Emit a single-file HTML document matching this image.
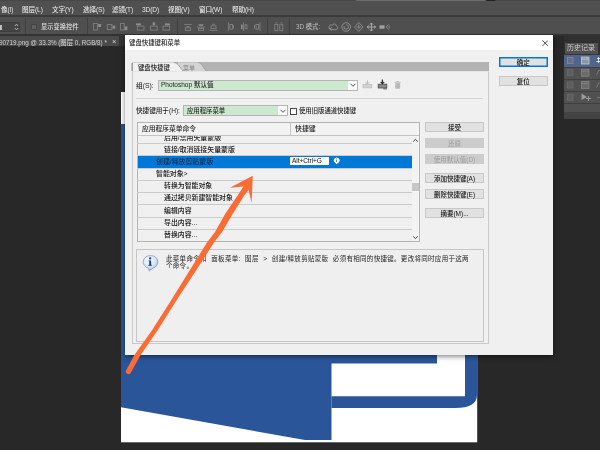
<!DOCTYPE html>
<html lang="zh-CN">
<head>
<meta charset="utf-8">
<title>键盘快捷键和菜单</title>
<style>
*{box-sizing:border-box;margin:0;padding:0}
html,body{width:600px;height:450px;overflow:hidden;background:#282828}
body{position:relative;font-family:"Liberation Sans","Noto Sans CJK SC",sans-serif;font-size:6.9px;color:#1c1c1c;font-weight:500}
.a{position:absolute;white-space:nowrap}
.t{position:absolute;white-space:nowrap;height:12px;line-height:12px;will-change:transform}
/* ---------- photoshop chrome ---------- */
#menubar{left:0;top:0;width:600px;height:15.5px;background:#505050}
#menuline{left:0;top:15.4px;width:600px;height:1.9px;background:#3b3b3b}
#optbar{left:0;top:17.3px;width:600px;height:16.5px;background:#4f4f4f}
#optline{left:0;top:33.8px;width:600px;height:2.5px;background:#333333}
.m{color:#e6e6e6;font-size:6.6px;letter-spacing:-0.1px;top:4.3px}
.o{color:#d0d0d0;font-size:7px;top:21px}
.vs{position:absolute;top:18px;width:1.2px;height:15.8px;background:#414141}
#tabstrip{left:0;top:36.3px;width:126px;height:10.2px;background:#343434}
#doctab{left:0;top:36.3px;width:118.7px;height:10.2px;background:#4a4a4a}
/* ---------- dialog ---------- */
#dlg{left:125px;top:34.7px;width:428px;height:320.3px;background:#f0f0f0;box-shadow:0 1.5px 5px rgba(0,0,0,.5)}
#dtitle{left:0;top:0;width:428px;height:15.6px;background:linear-gradient(#fff 0,#fff 14.6px,#f0f0f0 15.6px)}
.btn{position:absolute;will-change:transform;height:9.6px;line-height:9.6px;text-align:center;background:#e1e1e1;border:1px solid #c8c8c8;font-size:6.5px;color:#111;white-space:nowrap}
.btn.dis{background:#cccccc;border-color:#cccccc;color:#a2a2a2}
.sel{position:absolute;height:11px;background:#cce8cf;border:1px solid #b4b4b4}
.sel i{position:absolute;right:0;top:0;bottom:0;width:9px;background:#fafafa}
.row{position:absolute;left:137px;width:274.5px;height:1.2px;background:#cbcbcb}
</style>
</head>
<body>
<!-- menu bar -->
<div class="a" id="menubar"></div>
<div class="a" id="menuline"></div>
<div class="a" style="left:0;top:0;width:600px;height:1px;background:linear-gradient(90deg,#474747 0,#474747 355px,#6c6c6c 357px,#6c6c6c 485px,#222 487px,#222 495px,#474747 496px)"></div>
<div class="a" id="optbar"></div>
<div class="a" id="optline"></div>
<div class="t m" style="left:0.8px">像(I)</div>
<div class="t m" style="left:22px">图层(L)</div>
<div class="t m" style="left:52px">文字(Y)</div>
<div class="t m" style="left:82.5px">选择(S)</div>
<div class="t m" style="left:112px">滤镜(T)</div>
<div class="t m" style="left:142px">3D(D)</div>
<div class="t m" style="left:168px">视图(V)</div>
<div class="t m" style="left:199px">窗口(W)</div>
<div class="t m" style="left:232px">帮助(H)</div>
<!-- options bar -->
<div class="a" style="left:-2px;top:21.7px;width:22px;height:10px;background:#444444;border:0.8px solid #3e3e3e;border-radius:1.5px"></div>
<svg class="a" style="left:14px;top:23px" width="5" height="8" viewBox="0 0 5 8"><path d="M0.8 3 L2.5 1.2 L4.2 3 M0.8 5 L2.5 6.8 L4.2 5" fill="none" stroke="#c8c8c8" stroke-width="0.9"/></svg>
<div class="a" style="left:0;top:25px;width:2px;height:5px;background:#bdbdbd"></div>
<div class="vs" style="left:25px"></div>
<div class="a" style="left:31.3px;top:23.7px;width:5.8px;height:6.3px;background:#5f5f5f;border:0.8px solid #444"></div>
<div class="t o" style="left:41px;top:21.3px;font-size:6.25px;color:#dedede">显示变换控件</div>
<div class="vs" style="left:87px"></div>
<svg class="a" style="left:90px;top:20px" width="300" height="14" viewBox="90 20 300 14" fill="none" stroke="#808080" stroke-width="0.9">
 <g>
 <rect x="93.6" y="23.5" width="4" height="6.5"/><rect x="98.3" y="24" width="2.8" height="3" fill="#8c8c8c" stroke="none"/>
 <rect x="107.3" y="24.6" width="4.6" height="5"/><rect x="112.6" y="25.5" width="2.6" height="3.2" fill="#8c8c8c" stroke="none"/>
 <rect x="120.6" y="23.5" width="3.6" height="6.5"/><rect x="124.8" y="26.4" width="2.6" height="3.8" fill="#8c8c8c" stroke="none"/>
 <rect x="136" y="23.4" width="5" height="1.9" fill="#8c8c8c" stroke="none"/><rect x="137.4" y="26.1" width="6.6" height="4"/>
 <rect x="152.7" y="22.4" width="2.4" height="2.8" fill="#8c8c8c" stroke="none"/><rect x="150.5" y="26.1" width="6.6" height="4"/>
 <rect x="165" y="23.4" width="5" height="1.9" fill="#8c8c8c" stroke="none"/><rect x="163" y="26.1" width="6.6" height="4"/>
 <path d="M184 24.4h8M186.5 26.5h3"/><rect x="185.5" y="27.8" width="5" height="2.6"/>
 <path d="M197 27.200h8"/><rect x="198.700" y="24.3" width="4.6" height="1.6" fill="#8c8c8c" stroke="none"/><rect x="198.5" y="28.5" width="5" height="2"/>
 <path d="M209.5 30.400h8M212 24.300h3"/><rect x="211" y="25.8" width="5" height="2.8"/>
 <path d="M228.400 22.5v8.5M233.5 25v3.5"/><rect x="229.8" y="24.5" width="2.6" height="4.6"/>
 <path d="M243.5 22.5v8.5"/><rect x="241" y="24.5" width="1.6" height="4.6" fill="#8c8c8c" stroke="none"/><rect x="245" y="24.8" width="2" height="4"/>
 <path d="M260 22.5v8.5M254.5 25v3.5"/><rect x="256" y="24.5" width="2.6" height="4.6"/>
 <rect x="274.8" y="24.3" width="3" height="6.400"/><rect x="279.8" y="24.3" width="3" height="6.400"/><path d="M275.5 22.800h1.600M280.5 22.800h1.6"/>
 </g>
 <g stroke="#959595">
 <path d="M329.300 28.600c-1.200-2.600 1.200-4.600 3-3.400c1-2 4.400-1.200 4.200 1c1.600 0.400 1.800 2.800 0 3.200c-2 0.5-5 0.400-7.200-0.800z"/><path d="M331.5 30.5l-2.200-1.900l2.600-0.900" stroke-width="0.8"/>
 <circle cx="346.2" cy="27" r="4.3"/><path d="M346.200 24.800a2.200 2.200 0 1 1-2.100 1.5"/>
 <path d="M358.800 22.600l4.300 4.400l-4.300 4.400l-4.300-4.400zM358.800 24.600v4.800M356.400 27h4.8" stroke-width="0.8"/>
 <path d="M371.400 23v8M367.200 27h8.400M369.900 24.600l1.5-1.600l1.5 1.600M369.900 29.400l1.5 1.600l1.5-1.600M368.800 25.5l-1.600 1.5l1.600 1.5M374 25.5l1.600 1.5l-1.600 1.5" stroke="#b4b4b4"/>
 <rect x="379.5" y="25.3" width="5" height="3.400" fill="#a0a0a0" stroke="none"/><path d="M388.800 24.600l-2.800 2.400l2.800 2.400M390 25.400l-1.200 1.600l1.200 1.6" stroke-width="0.8"/>
 </g>
</svg>
<div class="vs" style="left:177px"></div>
<div class="vs" style="left:267px"></div>
<div class="vs" style="left:289px"></div>
<div class="t o" style="left:296px;top:21px;font-size:6.3px;color:#b9b9b9">3D 模式:</div>
<!-- document tab strip -->
<div class="a" id="tabstrip"></div>
<div class="a" id="doctab"></div>
<div class="t" style="left:-1px;top:36.5px;height:11px;line-height:11px;font-size:6.3px;color:#d2d2d2">90719.png @ 33.3% (图层 0, RGB/8) *</div>
<div class="t" style="left:111.5px;top:36px;height:11px;line-height:11px;font-size:7.5px;color:#d2d2d2">×</div>

<!-- document canvas -->
<svg class="a" style="left:121px;top:92px" width="357" height="351" viewBox="121 92 357 351">
 <rect x="121" y="92" width="356.2" height="350.3" fill="#ffffff"/>
 <path d="M121 124 H437 V363.5 H331.5 V440 H305 L121 407.3 Z" fill="#2a5599"/>
 <path d="M465 124 H477 V395 Q477 408 455 408 H331.5 V396.3 H465 Z" fill="#2a5599"/>
</svg>

<!-- dialog -->
<div class="a" id="dlg">
 <div class="a" id="dtitle"></div>
 <div class="t" style="left:4px;top:2.6px;font-size:6.4px;color:#222">键盘快捷键和菜单</div>
 <svg class="a" style="left:417px;top:5.3px" width="6.4" height="6.4" viewBox="0 0 7 7"><path d="M0.5 0.5L6.5 6.5M6.5 0.5L0.5 6.5" stroke="#222" stroke-width="0.9" fill="none"/></svg>
 <div class="btn" style="left:373.5px;top:22.8px;width:48.5px;border-color:#0078d7;box-shadow:inset 0 0 0 0.5px #0078d7">确定</div>
 <div class="btn" style="left:373.5px;top:41.3px;width:48.5px">复位</div>
 <!-- PANEL -->
</div>

<!-- panel (page coordinates) -->
<div class="a" style="left:131.5px;top:62.3px;width:357px;height:8.4px;background:#b3b3b3"></div>
<div class="a" style="left:131.5px;top:70.5px;width:357.5px;height:273.5px;background:#f0f0f0;border:1px solid #c9c9c9;border-top-color:#e6e6e6"></div>
<svg class="a" style="left:131px;top:62px" width="80" height="10" viewBox="131 62 80 10">
 <path d="M178 62.5 H198 Q200 62.5 201.5 64.5 L206 71 H178 Z" fill="#d4d4d4"/>
 <path d="M131.5 62.5 H174 Q176.5 62.5 178 64.5 L183 71 H131.5 Z" fill="#f0f0f0"/>
 <path d="M174 62.5 Q176.5 62.5 178 64.5 L183 71" fill="none" stroke="#8e8e8e" stroke-width="0.8"/>
 <path d="M198 62.5 Q200 62.5 201.5 64.5 L206 71" fill="none" stroke="#9a9a9a" stroke-width="0.7"/>
 <rect x="131.5" y="63" width="1.3" height="8" fill="#8c8c8c"/>
</svg>
<div class="t" style="left:138.3px;top:61.8px;font-size:6.35px;color:#111">键盘快捷键</div>
<div class="t" style="left:182.5px;top:61.8px;font-size:6px;color:#8a8a8a">菜单</div>
<!-- row 1 -->
<div class="t" style="left:136.3px;top:79.6px;font-size:6.8px">组(S):</div>
<div class="sel" style="left:157.5px;top:79.5px;width:200px"><i></i></div>
<div class="t" style="left:161px;top:79.4px;font-size:6.5px">Photoshop 默认值</div>
<svg class="a" style="left:349px;top:82px" width="8" height="6" viewBox="0 0 8 6"><path d="M1.5 1.8L4 4.3L6.5 1.8" fill="none" stroke="#444" stroke-width="0.9"/></svg>
<svg class="a" style="left:362px;top:79px" width="40" height="12" viewBox="362 79 40 12">
 <rect x="363" y="84.3" width="8.8" height="3.6" fill="#d2d2d2" stroke="#bcbcbc" stroke-width="0.7"/>
 <path d="M367.400 80.300v3M365.600 82.200l1.800 1.800l1.800-1.8" fill="none" stroke="#b4b4b4" stroke-width="1"/>
 <rect x="378.2" y="84.2" width="8.6" height="3.8" fill="#8a8a8a" stroke="#4a4a4a" stroke-width="0.8"/>
 <path d="M382.400 79.600v3.6" fill="none" stroke="#2c2c2c" stroke-width="1.3"/><path d="M380 82l2.400 2.600l2.400-2.600z" fill="#2c2c2c"/>
 <rect x="383.3" y="88" width="3.6" height="1.500" fill="#777"/>
 <g fill="#bababa"><rect x="395.2" y="83" width="5" height="5.8" rx="0.7"/><rect x="394.7" y="81.8" width="6" height="0.900"/><rect x="396.500" y="81" width="2.4" height="0.900"/></g>
</svg>
<div class="a" style="left:136px;top:98px;width:347px;height:1px;background:#d6d6d6"></div>
<!-- row 2 -->
<div class="t" style="left:136px;top:104.8px;font-size:6.6px">快捷键用于(H):</div>
<div class="sel" style="left:183px;top:105px;width:104.5px"><i></i></div>
<div class="t" style="left:187px;top:104.8px;font-size:6.35px">应用程序菜单</div>
<svg class="a" style="left:279px;top:107.5px" width="8" height="6" viewBox="0 0 8 6"><path d="M1.5 1.8L4 4.3L6.5 1.8" fill="none" stroke="#444" stroke-width="0.9"/></svg>
<div class="a" style="left:290px;top:107.5px;width:7px;height:7px;background:#fdfdfd;border:0.8px solid #4a4a4a"></div>
<div class="t" style="left:299px;top:104.8px;font-size:6.35px">使用旧版通道快捷键</div>
<!-- table -->
<div class="a" style="left:136.5px;top:122px;width:283.5px;height:120px;background:#f0f0f0;border:1px solid #b4b4b4"></div>
<div class="a" style="left:137.5px;top:123px;width:281.5px;height:11.5px;background:#f3f3f3"></div>
<div class="a" style="left:137.5px;top:134.5px;width:281.5px;height:1px;background:#c4c4c4"></div>
<div class="a" style="left:289.5px;top:123px;width:1px;height:11.5px;background:#c4c4c4"></div>
<div class="a" style="left:411.5px;top:135.5px;width:7.5px;height:105.5px;background:#f3f3f3"></div>
<div class="a" style="left:412px;top:182.5px;width:7px;height:8.5px;background:#c6c6c6"></div>
<svg class="a" style="left:412px;top:138px" width="7" height="5" viewBox="0 0 7 5"><path d="M1.2 3.6L3.5 1.3L5.8 3.6" fill="none" stroke="#444" stroke-width="1"/></svg>
<svg class="a" style="left:412px;top:235px" width="7" height="5" viewBox="0 0 7 5"><path d="M1.2 1.3L3.5 3.6L5.8 1.3" fill="none" stroke="#444" stroke-width="1"/></svg>
<div class="t" style="left:142px;top:123.3px;font-size:6.75px">应用程序菜单命令</div>
<div class="t" style="left:295px;top:123.3px;font-size:6.9px">快捷键</div>
<div class="row" style="top:143px"></div>
<div class="row" style="top:155.3px"></div>
<div class="row" style="top:168px"></div>
<div class="row" style="top:180px"></div>
<div class="row" style="top:191.7px"></div>
<div class="row" style="top:204px"></div>
<div class="row" style="top:216.7px"></div>
<div class="row" style="top:229px"></div>
<div class="a" style="left:137.5px;top:155.5px;width:274px;height:12.5px;background:#0078d7"></div>
<div class="a" style="left:137.5px;top:135.5px;width:274px;height:7.5px;overflow:hidden"><div class="t" style="left:26.5px;top:-4px">启用/禁用矢量蒙版</div></div>
<div class="t" style="left:164px;top:143.6px;color:#111">链接/取消链接矢量蒙版</div>
<div class="t" style="left:156px;top:155.7px;color:#0a2a4a">创建/释放剪贴蒙版</div>
<div class="t" style="left:156px;top:167.7px;color:#111">智能对象></div>
<div class="t" style="left:164px;top:180px;color:#111">转换为智能对象</div>
<div class="t" style="left:164px;top:192px;color:#111">通过拷贝新建智能对象</div>
<div class="t" style="left:164px;top:204.5px;color:#111">编辑内容</div>
<div class="t" style="left:164px;top:217px;color:#111">导出内容...</div>
<div class="t" style="left:164px;top:229px;color:#111">替换内容...</div>
<div class="a" style="left:289.8px;top:156.8px;width:39.2px;height:8.5px;background:#fff"></div>
<div class="t" style="left:291.8px;top:155.3px;font-size:6.5px;letter-spacing:-0.05px;color:#111">Alt+Ctrl+G</div>
<svg class="a" style="left:332.6px;top:157px" width="7" height="8" viewBox="0 0 7 8"><path d="M3.5 0.5a3.1 2.9 0 0 1 1.4 5.5L3.5 7.3L2.5 6a3.1 2.9 0 0 1 1-5.5z" fill="#fff"/><rect x="3.1" y="2.9" width="0.9" height="2" fill="#4a72b8"/><rect x="3.1" y="1.600" width="0.9" height="0.800" fill="#4a72b8"/></svg>
<!-- side buttons -->
<div class="btn" style="left:424.7px;top:122px;width:59px;height:10px">接受</div>
<div class="btn dis" style="left:424.7px;top:138.3px;width:59px">还原</div>
<div class="btn dis" style="left:424.7px;top:154.1px;width:59px">使用默认值(D)</div>
<div class="btn" style="left:424.7px;top:173.1px;width:59px">添加快捷键(A)</div>
<div class="btn" style="left:424.7px;top:189.4px;width:59px">删除快捷键(E)</div>
<div class="btn" style="left:424.7px;top:208px;width:59px">摘要(M)...</div>
<!-- info box -->
<div class="a" style="left:136px;top:248.5px;width:347.5px;height:93px;border:1px solid #c6c6c6;background:#efefef"></div>
<svg class="a" style="left:141px;top:254px" width="18" height="18" viewBox="0 0 18 18">
 <defs><radialGradient id="bg" cx="0.4" cy="0.3" r="0.8"><stop offset="0" stop-color="#ffffff"/><stop offset="0.55" stop-color="#d5e3f5"/><stop offset="1" stop-color="#86a6d4"/></radialGradient></defs>
 <path d="M9.3 1.6a7.6 6.5 0 0 1 2.6 12.6L8.3 17L7.6 14.3A7.6 6.5 0 0 1 9.3 1.6z" fill="url(#bg)" stroke="#7f9cc8" stroke-width="0.8"/>
 <rect x="8.2" y="6.5" width="1.9" height="5" fill="#1b3f9c"/><rect x="7.4" y="6.5" width="1.2" height="0.9" fill="#1b3f9c"/><rect x="7.3" y="10.8" width="3.7" height="0.9" fill="#1b3f9c"/><circle cx="9.1" cy="4.4" r="1.150" fill="#1b3f9c"/>
</svg>
<div class="t" id="info1" style="left:165.8px;top:252.5px;font-size:6.5px;letter-spacing:0.3px;word-spacing:2.4px;font-weight:400;color:#222">此菜单命令和 面板菜单: 图层 &gt; 创建/释放剪贴蒙版 必须有相同的快捷键。更改将同时应用于这两</div>
<div class="t" id="info2" style="left:165.8px;top:259.9px;font-size:6.5px;letter-spacing:0.3px;font-weight:400;color:#222">个命令。</div>
<!-- history panel -->
<div class="a" style="left:564px;top:36px;width:36px;height:83px;background:#515151"></div>
<div class="a" style="left:564px;top:36px;width:36px;height:18px;background:#303030"></div>
<div class="a" style="left:565px;top:43px;width:32.5px;height:10.5px;background:#515151"></div>
<div class="t" style="left:567px;top:42px;font-size:7px;color:#cccccc;font-weight:400">历史记录</div>
<div class="a" style="left:564px;top:53.5px;width:36px;height:1px;background:#353535"></div>
<div class="a" style="left:564px;top:54.5px;width:36px;height:12px;background:#51658b"></div>
<div class="a" style="left:564px;top:66.5px;width:36px;height:1px;background:#404040"></div>
<div class="a" style="left:564px;top:78.7px;width:36px;height:1px;background:#404040"></div>
<div class="a" style="left:564px;top:91px;width:36px;height:1px;background:#404040"></div>
<div class="a" style="left:564px;top:103.3px;width:36px;height:1px;background:#404040"></div>
<div class="a" style="left:564px;top:111.5px;width:36px;height:7.5px;background:#434343"></div>
<svg class="a" style="left:564px;top:54px" width="36" height="50" viewBox="564 54 36 50">
 <g fill="#646e86" stroke="#7f8aa6" stroke-width="0.8"><rect x="567.5" y="57.5" width="5.5" height="6"/></g>
 <g fill="#5e5e5e" stroke="#6c6c6c" stroke-width="0.8"><rect x="567.5" y="69.7" width="5.5" height="6"/><rect x="567.5" y="82" width="5.5" height="6"/><rect x="567.5" y="94.2" width="5.5" height="6"/></g>
 <g fill="#8d96a8" stroke="#c6ccd8" stroke-width="0.8"><rect x="581.5" y="57" width="7.5" height="7"/><path d="M581.5 59h7.5" /></g>
 <g fill="#6a6a6a" stroke="#858585" stroke-width="0.8"><rect x="581.5" y="69.2" width="7.5" height="7"/><path d="M581.5 71.2h7.5"/><rect x="581.5" y="81.5" width="7.5" height="7"/><path d="M581.5 83.5h7.5"/></g>
 <path d="M581.5 93.5l5.5 3.5l-5.5 3z" fill="#9a9a9a"/><path d="M588.5 96v5M586 98.5h5" stroke="#9a9a9a" stroke-width="1" fill="none"/>
 <path d="M597 58.5h3M598.5 57v6M596.5 61.5h3.5" stroke="#e8e8e8" stroke-width="0.9" fill="none"/>
 <path d="M596.5 75l2.5-5l1 1" stroke="#7a7a7a" stroke-width="0.9" fill="none"/><path d="M596.5 87.5l2.5-5l1 1" stroke="#7a7a7a" stroke-width="0.9" fill="none"/><path d="M597 97.5h3" stroke="#7a7a7a" stroke-width="0.9" fill="none"/>
</svg>

<!-- annotation arrow -->
<svg class="a" style="left:0;top:0" width="600" height="450" viewBox="0 0 600 450">
 <path d="M126.2 370.3 L134.4 355 L152.2 330 L171.3 300 L193 265 L207 242.5 L215 232 L225.4 213.5 L237.9 195 L243.5 186.5 L229.9 187.8 L252.8 175.7 L251.6 203 L248.6 189.8 L244.6 195 L232.9 213.5 L222.1 232 L214 242.5 L199.6 265 L176.7 300 L157.8 330 L140.6 355 L130.8 372.8 A2.6 2.6 0 0 1 126.2 370.3 Z" fill="#fa6c34"/>
</svg>

</body>
</html>
